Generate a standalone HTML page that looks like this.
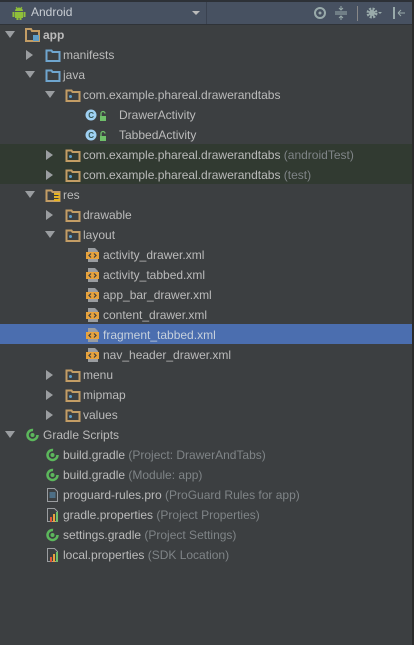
<!DOCTYPE html>
<html><head><meta charset="utf-8">
<style>
*{margin:0;padding:0;box-sizing:border-box}
body{width:414px;height:645px;background:#3c3f41;font-family:"Liberation Sans",sans-serif;font-size:12px;color:#bbbbbb;position:relative;overflow:hidden}
.hdr{position:absolute;left:0;top:0;width:414px;height:25px;background:#475161;border-top:2px solid #2d3137;border-bottom:1px solid #2f3338}
.row{position:absolute;left:0;width:412px;height:20px;line-height:20px;white-space:nowrap}
.row span.t{position:absolute;top:0}
.g{color:#7f8487}
svg{position:absolute}
.rb{position:absolute;right:0;top:0;width:2px;height:645px;background:#2b2b2b}
</style></head><body>
<div class="hdr">
 <svg style="left:11px;top:3px" width="16" height="16" viewBox="0 0 16 16"><path d="M4 6a4 3.5 0 0 1 8 0z" fill="#8fbf3a"/><rect x="4" y="7" width="8" height="6" fill="#8fbf3a"/><rect x="1.5" y="7" width="2" height="5" fill="#8fbf3a"/><rect x="12.5" y="7" width="2" height="5" fill="#8fbf3a"/><rect x="5.5" y="12" width="2" height="3" fill="#8fbf3a"/><rect x="8.5" y="12" width="2" height="3" fill="#8fbf3a"/><path d="M5 2l1.5 2M11 2l-1.5 2" stroke="#8fbf3a"/></svg>
 <span style="position:absolute;left:31px;top:3px;color:#c8cdd3;font-size:12px">Android</span>
 <svg style="left:192px;top:9px" width="8" height="5"><path d="M0 0h8L4 4z" fill="#bbb"/></svg>
 <div style="position:absolute;left:206px;top:0;width:1px;height:22px;background:#3a4250"></div>
 <svg style="left:313px;top:4px" width="14" height="14" viewBox="0 0 14 14"><circle cx="7" cy="7" r="5" fill="none" stroke="#9aa" stroke-width="2"/><circle cx="7" cy="7" r="1.5" fill="#9aa"/></svg>
 <svg style="left:334px;top:4px" width="14" height="14" viewBox="0 0 14 14"><path d="M1 6h12M1 8h12M7 0v4M5 2l2 2 2-2M7 14v-4M5 12l2-2 2 2" stroke="#9aa" fill="none"/></svg>
 <div style="position:absolute;left:357px;top:4px;width:1px;height:15px;background:#888"></div>
 <svg style="left:365px;top:4px" width="18" height="14" viewBox="0 0 18 14"><circle cx="7" cy="7" r="4" fill="none" stroke="#9aa" stroke-width="3" stroke-dasharray="2 1.2"/><circle cx="7" cy="7" r="3" fill="#9aa"/><path d="M13 6h4l-2 2z" fill="#9aa"/></svg>
 <svg style="left:392px;top:4px" width="14" height="14" viewBox="0 0 14 14"><rect x="1" y="1" width="2" height="12" fill="#9aa"/><path d="M6 7h7M6 7l3-3M6 7l3 3" stroke="#9aa" fill="none"/></svg>
</div>

<div class="row" style="top:144px;height:40px;background:#313a31"></div>
<div class="row" style="top:324px;background:#4b6eaf"></div>

<div id="tree"></div>
<div class="rb"></div>

<script>
const A_DOWN='<path d="M0 1h10L5 8z" fill="#9a9da0"/>';
const A_RIGHT='<path d="M1 0v10l7-5z" fill="#9a9da0"/>';
function arrow(x,y,open){return `<svg style="left:${x}px;top:${y+5}px" width="10" height="10">${open?A_DOWN:A_RIGHT}</svg>`}
const ic={
 mod:'<path d="M1 2h5l1 2h7v10H1z" fill="none" stroke="#c39d65" stroke-width="2"/><rect x="8" y="8" width="6" height="6" fill="#5e9ec9"/>',
 fb:'<path d="M1.5 3.5h5l1 1.5h7v9h-13z" fill="none" stroke="#6fa6cf" stroke-width="2"/>',
 pkg:'<path d="M1.5 3.5h5l1 1.5h7v9h-13z" fill="none" stroke="#c39d65" stroke-width="2"/><circle cx="5.5" cy="9.5" r="1.5" fill="#5e9ec9"/>',
 res:'<path d="M1.5 3.5h5l1 1.5h7v9h-13z" fill="none" stroke="#c39d65" stroke-width="2"/><rect x="9" y="6" width="6" height="2" fill="#e6b422"/><rect x="9" y="9" width="6" height="2" fill="#e6b422"/><rect x="9" y="12" width="6" height="2" fill="#e6b422"/>',
 xml:'<path d="M3 1h7l3 3v11H3z" fill="#9a9da0"/><rect x="1" y="5" width="13" height="7" fill="#e8a33d"/><path d="M6 6.5l-2 2 2 2M9 6.5l2 2-2 2" stroke="#3c3f41" fill="none" stroke-width="1.2"/>',
 cls:'<circle cx="6" cy="8" r="5.5" fill="#9fd0f2"/><text x="3.3" y="11" font-size="8" font-weight="bold" fill="#355" font-family="Liberation Sans">C</text><rect x="15" y="9" width="6" height="5" fill="#6fbf6a"/><path d="M16 9V6.5a2 2 0 0 1 4 0" stroke="#6fbf6a" fill="none" stroke-width="1.3"/>',
 gr:'<circle cx="7.5" cy="8" r="5" fill="none" stroke="#5cb85c" stroke-width="2.5" stroke-dasharray="24 8"/><circle cx="7.5" cy="8" r="2" fill="#5cb85c"/>',
 pro:'<path d="M2.5 1.5h7l3 3v10h-10z" fill="none" stroke="#9a9da0"/><path d="M4.5 6h6M4.5 8h6M4.5 10h6" stroke="#5e9ec9"/>',
 prop:'<path d="M2.5 1.5h7l3 3v10h-10z" fill="none" stroke="#9a9da0"/><rect x="5" y="10" width="2" height="5" fill="#e05a3a"/><rect x="8" y="7" width="2" height="8" fill="#e8a33d"/><rect x="11" y="5" width="2" height="10" fill="#6fbf6a"/>'
};
const rows=[
[0,1,'mod','app','',0,1],
[1,0,'fb','manifests'],
[1,1,'fb','java'],
[2,1,'pkg','com.example.phareal.drawerandtabs'],
[3,null,'cls','DrawerActivity','',119],
[3,null,'cls','TabbedActivity','',119],
[2,0,'pkg','com.example.phareal.drawerandtabs',' (androidTest)'],
[2,0,'pkg','com.example.phareal.drawerandtabs',' (test)'],
[1,1,'res','res'],
[2,0,'pkg','drawable'],
[2,1,'pkg','layout'],
[3,null,'xml','activity_drawer.xml'],
[3,null,'xml','activity_tabbed.xml'],
[3,null,'xml','app_bar_drawer.xml'],
[3,null,'xml','content_drawer.xml'],
[3,null,'xml','fragment_tabbed.xml'],
[3,null,'xml','nav_header_drawer.xml'],
[2,0,'pkg','menu'],
[2,0,'pkg','mipmap'],
[2,0,'pkg','values'],
[0,1,'gr','Gradle Scripts'],
[1,null,'gr','build.gradle',' (Project: DrawerAndTabs)'],
[1,null,'gr','build.gradle',' (Module: app)'],
[1,null,'pro','proguard-rules.pro',' (ProGuard Rules for app)'],
[1,null,'prop','gradle.properties',' (Project Properties)'],
[1,null,'gr','settings.gradle',' (Project Settings)'],
[1,null,'prop','local.properties',' (SDK Location)']
];
let h='';
rows.forEach((r,i)=>{
 const [L,ar,icon,txt,grey,tx,b]=r;
 const y=25+i*20;
 let ix, ax;
 if(ar===null){ix=L===3?85:45;}
 else {ix=25+20*L; ax=5+20*L;}
 h+=`<div class="row" style="top:${y}px">`;
 if(ar!==null) h+=arrow(ax,0,ar);
 h+=`<svg style="left:${ix}px;top:2px" width="22" height="16" viewBox="0 0 22 16">${ic[icon]}</svg>`;
 const x=tx||ix+18;
 h+=`<span class="t" style="left:${x}px;${b?'font-weight:bold;':''}${i==15?'color:#c6d0dc;':''}">${txt}${grey?'<span class="g">'+grey+'</span>':''}</span>`;
 h+='</div>';
});
document.getElementById('tree').innerHTML=h;
</script>
</body></html>
